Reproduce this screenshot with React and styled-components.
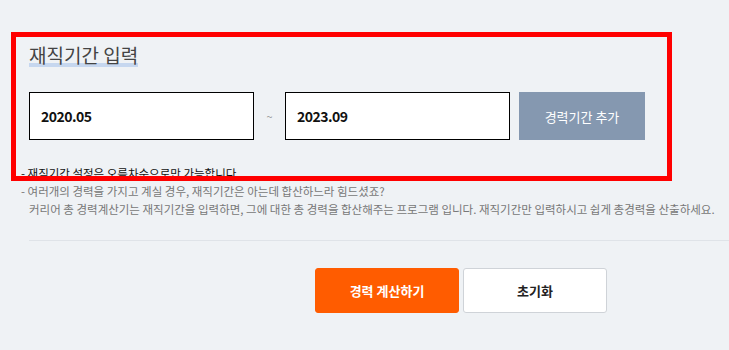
import styled, { createGlobalStyle } from 'styled-components'

const GlobalStyle = createGlobalStyle`
    html, body {
        margin: 0;
        padding: 0;
        background: #eff2f5;
        overflow: hidden;
    }
    body {
        font-family: "Noto Sans CJK KR", "Noto Sans", sans-serif;
        color: #333;
    }
`

const Page = styled.div`
    position: relative;
    padding: 43px 0 0 21px;
`

const Highlight = styled.div`
    position: absolute;
    left: 11px;
    top: 32px;
    width: 651px;
    height: 139px;
    border: 5px solid #ff0000;
    pointer-events: none;
`

const FormBlock = styled.div`
    padding-left: 8px;
`

const Title = styled.h2`
    display: inline-block;
    margin: 0;
    font-size: 19px;
    font-weight: 400;
    line-height: 24px;
    color: #444;
    background: linear-gradient(transparent 82%, #c6d7ef 82%);
`

const InputRow = styled.div`
    display: flex;
    align-items: center;
    margin-top: 24px;
`

const DateInput = styled.input`
    box-sizing: border-box;
    width: 225px;
    height: 48px;
    border: 1px solid #000;
    background: #fff;
    padding: 0 11px;
    font-family: inherit;
    font-size: 14px;
    font-weight: 700;
    letter-spacing: -0.5px;
    color: #111;
    outline: none;
`

const Tilde = styled.span`
    width: 31px;
    text-align: center;
    font-size: 11px;
    color: #999;
`

const AddButton = styled.button`
    margin-left: 9px;
    width: 126px;
    height: 48px;
    border: none;
    background: #8598b0;
    color: #fff;
    font-family: inherit;
    font-size: 13px;
    cursor: pointer;
`

const Notes = styled.ul`
    list-style: none;
    margin: 24px 0 0;
    padding: 0;
    font-size: 11.5px;
    line-height: 18px;
`

const Note = styled.li`
    color: ${props => props.strong ? '#111' : '#777'};
    padding-left: ${props => props.indent ? '8px' : '0'};
`

const Divider = styled.div`
    margin: 22px 0 0 8px;
    border-bottom: 1px solid #dfe3e8;
`

const ButtonRow = styled.div`
    display: flex;
    gap: 4px;
    margin-top: 27px;
    padding-left: 294px;
`

const ActionButton = styled.button`
    box-sizing: border-box;
    width: 144px;
    height: 45px;
    border-radius: 3px;
    font-family: inherit;
    font-size: 13px;
    font-weight: 700;
    cursor: pointer;
    background: ${props => props.primary ? '#ff5c00' : '#fff'};
    color: ${props => props.primary ? '#fff' : '#222'};
    border: 1px solid ${props => props.primary ? '#ff5c00' : '#cfd3d8'};
`

export default function App() {
    return (
        <>
            <GlobalStyle />
            <Page>
                <FormBlock>
                    <Title>재직기간 입력</Title>
                    <InputRow>
                        <DateInput defaultValue="2020.05" />
                        <Tilde>~</Tilde>
                        <DateInput defaultValue="2023.09" />
                        <AddButton>경력기간 추가</AddButton>
                    </InputRow>
                </FormBlock>
                <Notes>
                    <Note strong>- 재직기간 설정은 오름차순으로만 가능합니다.</Note>
                    <Note>- 여러개의 경력을 가지고 계실 경우, 재직기간은 아는데 합산하느라 힘드셨죠?</Note>
                    <Note indent>커리어 총 경력계산기는 재직기간을 입력하면, 그에 대한 총 경력을 합산해주는 프로그램 입니다. 재직기간만 입력하시고 쉽게 총경력을 산출하세요.</Note>
                </Notes>
                <Divider />
                <ButtonRow>
                    <ActionButton primary>경력 계산하기</ActionButton>
                    <ActionButton>초기화</ActionButton>
                </ButtonRow>
                <Highlight />
            </Page>
        </>
    )
}
